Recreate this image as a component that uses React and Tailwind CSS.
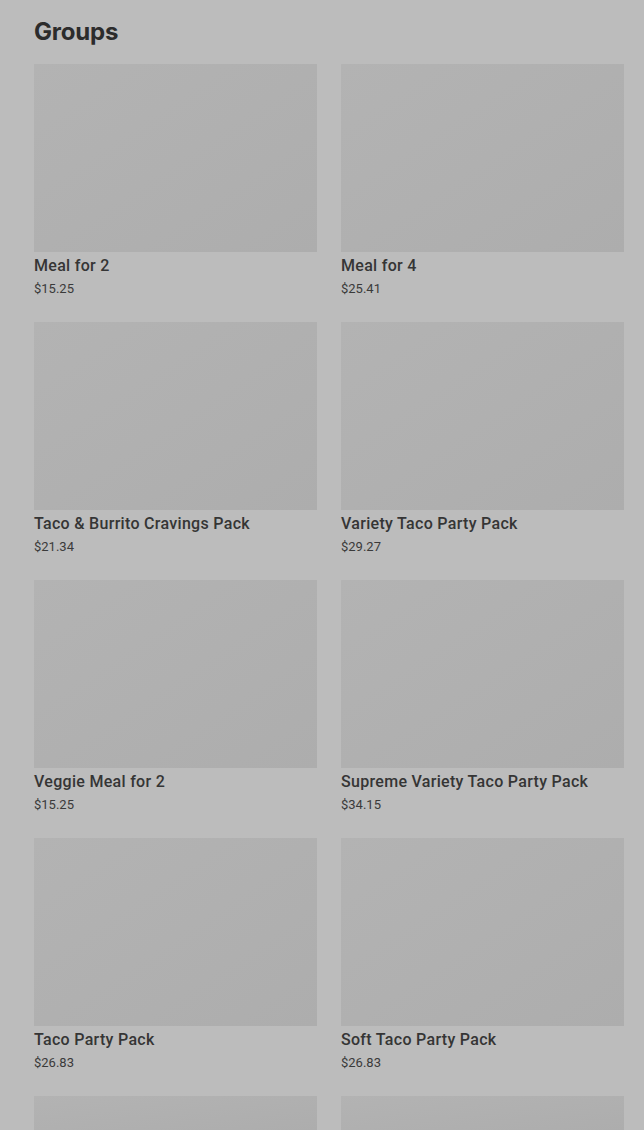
import React from "react";

const items = [
  ["Meal for 2", "$15.25"],
  ["Meal for 4", "$25.41"],
  ["Taco & Burrito Cravings Pack", "$21.34"],
  ["Variety Taco Party Pack", "$29.27"],
  ["Veggie Meal for 2", "$15.25"],
  ["Supreme Variety Taco Party Pack", "$34.15"],
  ["Taco Party Pack", "$26.83"],
  ["Soft Taco Party Pack", "$26.83"],
  ["Cravings Value Meal", "$9.99"],
  ["Nachos Party Pack", "$24.40"],
];

export default function App() {
  return (
    <div className="h-[1130px] overflow-hidden bg-[#bcbcbc] pl-[34px] pr-[20px] pt-[16px] text-[#333]" style={{ fontFamily: "Roboto, 'Liberation Sans', sans-serif" }}>
      <h1 className="text-[24px] leading-[32px] font-bold text-[#2c2c2c] tracking-[-0.2px]" style={{ fontFamily: "Inter, 'Liberation Sans', sans-serif" }}>Groups</h1>
      <div className="mt-[16px] grid grid-cols-2 gap-x-[24px] gap-y-[24px]">
        {items.slice(0, 8).map(([name, price]) => (
          <div key={name} className="flex flex-col">
            <div className="h-[188px] bg-gradient-to-br from-[#b3b3b3] to-[#adadad]" />
            <div className="mt-[4px] text-[16px] leading-[20px] font-medium tracking-[0.3px] text-[#353535]">{name}</div>
            <div className="mt-[4px] text-[13px] leading-[18px] text-[#3a3a3a]">{price}</div>
          </div>
        ))}
        <div className="h-[34px] bg-gradient-to-br from-[#b3b3b3] to-[#adadad]" />
        <div className="h-[34px] bg-gradient-to-br from-[#b3b3b3] to-[#adadad]" />
      </div>
    </div>
  );
}
